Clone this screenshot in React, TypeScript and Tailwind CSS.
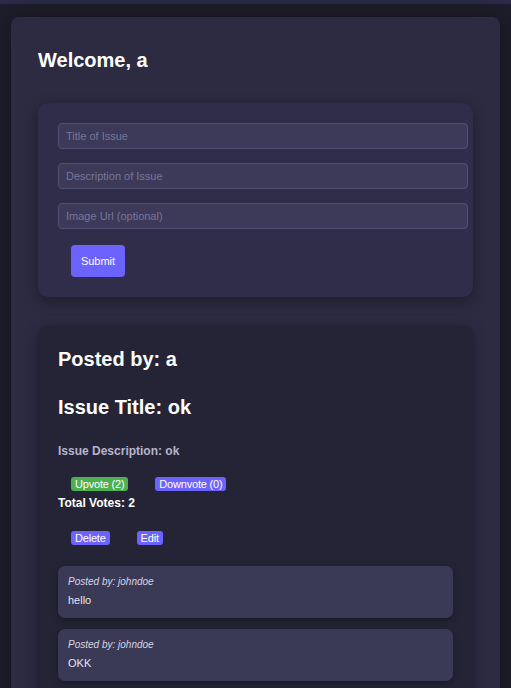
import React from "react";

const comments = [
  { author: "johndoe", text: "hello" },
  { author: "johndoe", text: "OKK" },
];

function Field({ placeholder }: { placeholder: string }) {
  return (
    <input
      placeholder={placeholder}
      className="h-[26px] w-full rounded-[4px] border border-[#524f70] bg-[#3c3a58] px-[7px] text-[11px] text-white placeholder:text-[#78769a] outline-none"
    />
  );
}

function Badge({ label, color }: { label: string; color: string }) {
  return (
    <span className={`inline-block rounded-[3px] px-[4px] text-[11px] leading-[14px] tracking-[-0.2px] text-white ${color}`}>
      {label}
    </span>
  );
}

export default function App() {
  return (
    <div className="min-h-[688px] bg-[#1e1d2b] font-['Liberation_Sans',Arial,sans-serif]">
      <div className="h-1 bg-[#2b2a48]" />
      <div className="mx-[11px] mt-[13px] rounded-t-[8px] bg-[#2d2b42] px-[27px] pb-10 pt-[32px] shadow-[0_0_24px_rgba(0,0,0,0.35)]">
        <h2 className="text-[20px] font-bold leading-[23px] text-white">Welcome, a</h2>

        <form className="mt-[31px] flex flex-col gap-[14px] rounded-[10px] bg-[#2f2d4a] pb-5 pl-5 pr-[5px] pt-5 shadow-[0_4px_14px_rgba(0,0,0,0.35)]">
          <Field placeholder="Title of Issue" />
          <Field placeholder="Description of Issue" />
          <Field placeholder="Image Url (optional)" />
          <button
            type="button"
            className="ml-[13px] mt-[2px] h-8 w-[54px] rounded-[4px] bg-[#6c63ff] text-[11px] text-white"
          >
            Submit
          </button>
        </form>

        <div className="mt-[28px] rounded-[10px] bg-[#252437] px-5 pb-6 pt-[23px] shadow-[0_4px_14px_rgba(0,0,0,0.35)]">
          <h2 className="text-[20px] font-bold leading-[23px] text-white">Posted by: a</h2>
          <h2 className="mt-[25px] text-[20px] font-bold leading-[23px] text-white">Issue Title: ok</h2>
          <p className="mt-[25px] text-[12px] font-bold leading-[14px] text-[#b6b4cc]">Issue Description: ok</p>

          <div className="mt-[19px] flex gap-[27px] pl-[13px]">
            <Badge label="Upvote (2)" color="bg-[#4caf50]" />
            <Badge label="Downvote (0)" color="bg-[#6c63ff]" />
          </div>
          <p className="mt-[5px] text-[12px] font-bold leading-[14px] text-white">Total Votes: 2</p>

          <div className="mt-[21px] flex gap-[27px] pl-[13px]">
            <Badge label="Delete" color="bg-[#6c63ff]" />
            <Badge label="Edit" color="bg-[#6c63ff]" />
          </div>

          <div className="mt-[21px] flex w-[395px] flex-col gap-[11px]">
            {comments.map((c, i) => (
              <div key={i} className="h-[52px] rounded-[7px] bg-[#3b3a56] px-[10px] pt-[10px] shadow-[0_2px_6px_rgba(0,0,0,0.35)]">
                <p className="text-[10px] italic leading-[12px] text-[#d6d4e6]">Posted by: {c.author}</p>
                <p className="mt-[5px] text-[11px] leading-[14px] text-[#e4e2f0]">{c.text}</p>
              </div>
            ))}
          </div>
        </div>
      </div>
    </div>
  );
}
